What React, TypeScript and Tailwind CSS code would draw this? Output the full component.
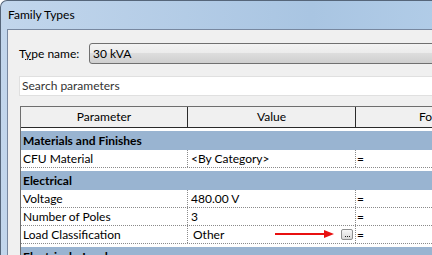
import React from 'react';

const font = { fontFamily: 'Lato, "Noto Sans", sans-serif' };

type Row = { name: string; value: string; formula: string; browse?: boolean };
type Section = { title: string; rows: Row[] };

const sections: Section[] = [
  { title: 'Materials and Finishes', rows: [{ name: 'CFU Material', value: '<By Category>', formula: '=' }] },
  {
    title: 'Electrical',
    rows: [
      { name: 'Voltage', value: '480.00 V', formula: '=' },
      { name: 'Number of Poles', value: '3', formula: '=' },
      { name: 'Load Classification', value: 'Other', formula: '=', browse: true },
    ],
  },
  { title: 'Electrical - Loads', rows: [] },
];

const SectionRow: React.FC<{ title: string }> = ({ title }) => (
  <div className="pt-[3px]">
    <div className="h-[19px] bg-[#99b4d1] pl-[2px] flex items-center font-bold leading-none">{title}</div>
  </div>
);

const DataRow: React.FC<{ row: Row }> = ({ row }) => (
  <div className="flex h-[18px] border-b border-dotted border-[#8a8a8a]">
    <div className="w-[166px] shrink-0 pl-[2px] flex items-center leading-none">{row.name}</div>
    <div className="relative w-[168px] shrink-0 border-l border-dotted border-[#8a8a8a] flex items-center justify-between leading-none">
      <span className={row.browse ? 'pl-[5px]' : 'pl-[3px]'}>{row.value}</span>
      {row.browse && (
        <>
          <svg className="absolute left-[86px] top-[3px]" width="62" height="10" viewBox="0 0 62 10">
            <line x1="1" y1="5" x2="52" y2="5" stroke="#e81010" strokeWidth="2" />
            <polygon points="50,1 60,5 50,9" fill="#e81010" />
          </svg>
          <div className="mr-[2px] w-[12px] h-[11px] rounded-[2px] border border-[#8e8f8f] bg-gradient-to-b from-[#f6f6f6] to-[#d8d8d8] flex items-end justify-center pb-[2px] gap-[1px]">
            <span className="w-[1px] h-[1px] bg-[#222]" />
            <span className="w-[1px] h-[1px] bg-[#222]" />
            <span className="w-[1px] h-[1px] bg-[#222]" />
          </div>
        </>
      )}
    </div>
    <div className="w-[170px] shrink-0 border-l border-dotted border-[#8a8a8a] pl-[1px] flex items-center leading-none">{row.formula}</div>
  </div>
);

export default function App() {
  return (
    <div className="w-[432px] h-[255px] overflow-hidden bg-white text-[12px] text-black" style={font}>
      <div className="h-full w-[620px] rounded-tl-[7px] border-l border-t border-[#56667a] bg-gradient-to-r from-[#c2d6ec] via-[#a9c5e2] to-[#bcd6ef] flex flex-col">
        <div className="h-[28px] shrink-0 pl-[7px] flex items-center">Family Types</div>
        <div className="flex-1 min-h-0 ml-[6px] border-l border-t border-[#7888a0] bg-[#f0f0f0]">
          <div className="flex items-center mt-[13px] pl-[11px]">
            <div className="w-[70px] shrink-0">
              T<span className="underline">y</span>pe name:
            </div>
            <div className="flex-1 h-[21px] rounded-l-[3px] border border-[#707070] bg-[linear-gradient(to_bottom,#f3f3f3_0%,#ebebeb_50%,#dddddd_50%,#cfcfcf_100%)] flex items-center pl-[3px]">
              30 kVA
            </div>
          </div>
          <div className="ml-[11px] mt-[12px] h-[20px] border border-[#e0e0e0] bg-white flex items-center pl-[2px] text-[#333]">
            Search parameters
          </div>
          <div className="ml-[12px] mt-[10px] border-l border-t border-[#6e6e6e] bg-white">
            <div className="flex h-[21px] bg-[#f0f0f0] border-b border-[#2a2a2a]">
              <div className="w-[166px] shrink-0 flex items-center justify-center">Parameter</div>
              <div className="w-[168px] shrink-0 border-l border-[#2a2a2a] flex items-center justify-center">Value</div>
              <div className="w-[170px] shrink-0 border-l border-[#2a2a2a] flex items-center justify-center">Formula</div>
            </div>
            {sections.map(s => (
              <div key={s.title}>
                <SectionRow title={s.title} />
                {s.rows.map(r => (
                  <DataRow key={r.name} row={r} />
                ))}
              </div>
            ))}
          </div>
        </div>
      </div>
    </div>
  );
}
